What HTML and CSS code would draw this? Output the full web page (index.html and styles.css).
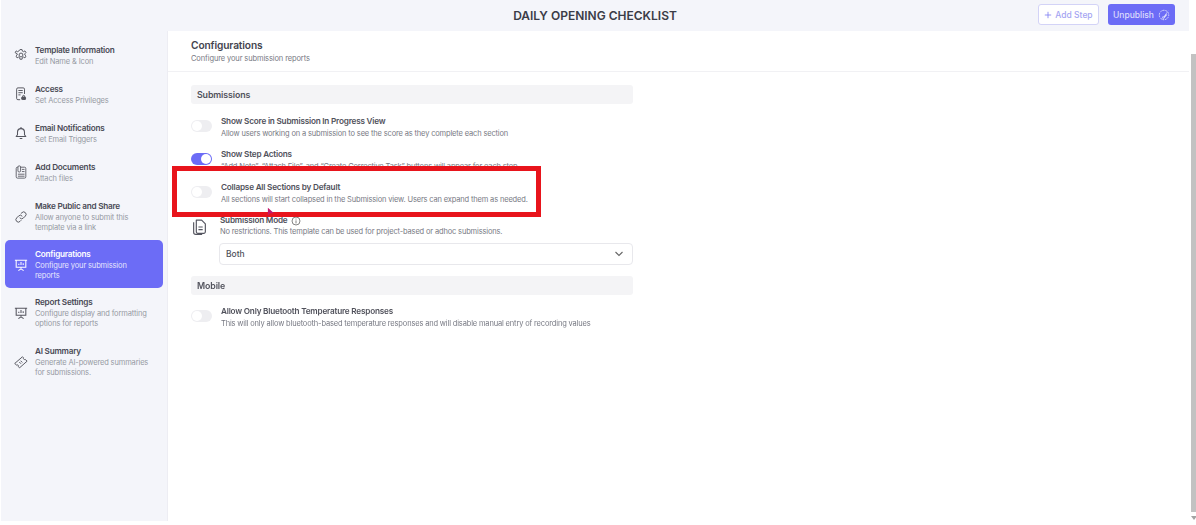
FILE: index.html
```html
<!DOCTYPE html>
<html lang="en">
<head>
<meta charset="utf-8">
<title>Daily Opening Checklist</title>
<link rel="stylesheet" href="styles.css">
</head>
<body>
<div class="app">
  <div class="window">
    <header class="topbar">
      <h1 class="page-title">DAILY OPENING CHECKLIST</h1>
      <div class="top-actions">
        <button class="btn btn-outline"><svg class="btn-icon" viewBox="0 0 10 10"><path d="M5 1v8M1 5h8" fill="none" stroke="currentColor" stroke-width="1"/></svg>Add Step</button>
        <button class="btn btn-solid">Unpublish<svg class="btn-icon-lg" viewBox="0 0 14 14"><path d="M7 1.500a5.500 5.500 0 1 0 0 11a5.500 5.500 0 0 0 0-11z" fill="none" stroke="currentColor" stroke-width="1.100" stroke-dasharray="2 1"/><path d="M4 12.500 12.500 1 9.500 6.500 11 6.500 5.500 13 7 8.500 5.500 8.500z" fill="currentColor"/></svg></button>
      </div>
    </header>
    <div class="body-row">
      <nav class="sidebar">
        <a class="nav-item">
          <svg class="nav-icon" viewBox="0 0 16 16"><g fill="none" stroke="currentColor" stroke-width="1.100"><circle cx="8" cy="8" r="2.200"/><path d="M6.800 1.800h2.400l.4 1.800 1.300.6 1.600-.9 1.200 2-1.300 1.300v1.400l1.300 1.300-1.200 2-1.600-.9-1.300.6-.4 1.800H6.800l-.4-1.800-1.300-.6-1.600.9-1.200-2 1.300-1.300V6.600L1.300 5.300l1.200-2 1.600.9 1.300-.6z" stroke-linejoin="round"/></g></svg>
          <span class="nav-text"><b>Template Information</b><small>Edit Name &amp; Icon</small></span>
        </a>
        <a class="nav-item">
          <svg class="nav-icon" viewBox="0 0 16 16"><g fill="none" stroke="currentColor" stroke-width="1.100"><path d="M7 14.500H4.500A1.500 1.500 0 0 1 3 13V2.500A1.500 1.500 0 0 1 4.500 1h6A1.500 1.500 0 0 1 12 2.500V8"/><path d="M5 4h5M5 6.500h5M5 9h2.500"/><circle cx="11" cy="10.800" r="1.200"/><rect x="8.800" y="11.500" width="4.400" height="2.800" rx=".6" fill="currentColor"/></g></svg>
          <span class="nav-text"><b>Access</b><small>Set Access Privileges</small></span>
        </a>
        <a class="nav-item">
          <svg class="nav-icon" viewBox="0 0 16 16"><g fill="none" stroke="currentColor" stroke-width="1.200"><path d="M2.500 12h11l-1.500-2V7a4 4 0 0 0-8 0v3z" stroke-linejoin="round"/><path d="M8 1v2M6.500 14.300h3"/></g></svg>
          <span class="nav-text"><b>Email Notifications</b><small>Set Email Triggers</small></span>
        </a>
        <a class="nav-item">
          <svg class="nav-icon" viewBox="0 0 16 16"><g fill="none" stroke="currentColor" stroke-width="1"><rect x="2.500" y="2.500" width="11" height="12.500" rx="1.500"/><path d="M9 5h3M9 7.500h3M4.500 10.500h7.500M4.500 12.800h7.500"/><rect x="4.500" y="1" width="3" height="7" rx="1.300" fill="#f4f5fa"/></g></svg>
          <span class="nav-text"><b>Add Documents</b><small>Attach files</small></span>
        </a>
        <a class="nav-item tall">
          <svg class="nav-icon" viewBox="0 0 16 16"><g fill="none" stroke="currentColor" stroke-width="1.100" stroke-linecap="round"><path d="M6.800 9.200a2.700 2.700 0 0 0 3.900 0l2.300-2.300a2.700 2.700 0 0 0-3.900-3.900l-1 1"/><path d="M9.200 6.800a2.700 2.700 0 0 0-3.900 0L3 9.100A2.700 2.700 0 0 0 6.900 13l1-1"/></g></svg>
          <span class="nav-text"><b>Make Public and Share</b><small>Allow anyone to submit this template via a link</small></span>
        </a>
        <a class="nav-item tall is-active">
          <svg class="nav-icon" viewBox="0 0 16 16"><g fill="none" stroke="currentColor" stroke-width="1.200"><path d="M1 2.500h14M2.500 2.500v8h11v-8M8 10.500v2M5 14.500l3-2 3 2"/><path d="M5.500 8V6.500M8 8V4.500M10.500 8V6"/></g></svg>
          <span class="nav-text"><b>Configurations</b><small>Configure your submission reports</small></span>
        </a>
        <a class="nav-item tall">
          <svg class="nav-icon" viewBox="0 0 16 16"><g fill="none" stroke="currentColor" stroke-width="1.200"><path d="M1 2.500h14M2.500 2.500v8h11v-8M8 10.500v2M5 14.500l3-2 3 2"/><path d="M5.500 8V6.500M8 8V4.500M10.500 8V6"/></g></svg>
          <span class="nav-text"><b>Report Settings</b><small>Configure display and formatting options for reports</small></span>
        </a>
        <a class="nav-item tall">
          <svg class="nav-icon" viewBox="0 0 16 16"><g fill="none" stroke="currentColor" stroke-width="1.100"><path d="M.8 9.700 9.700 2l1.200 1.300a1.300 1.300 0 0 0 1.800 1.700L15 7 6.300 14.700 5 13.300a1.300 1.300 0 0 0-1.900-1.700z" stroke-linejoin="round"/><path d="M7.500 6.500l2 2M6 8l2 2"/></g></svg>
          <span class="nav-text"><b>AI Summary</b><small>Generate AI-powered summaries for submissions.</small></span>
        </a>
      </nav>
      <main class="content">
        <div class="content-head">
          <h2>Configurations</h2>
          <p>Configure your submission reports</p>
        </div>
        <div class="sections">
          <div class="section-bar">Submissions</div>
          <div class="setting first">
            <span class="toggle"></span>
            <div class="setting-text"><h3>Show Score in Submission In Progress View</h3><p>Allow users working on a submission to see the score as they complete each section</p></div>
          </div>
          <div class="setting">
            <span class="toggle on"></span>
            <div class="setting-text"><h3>Show Step Actions</h3><p>“Add Note”, “Attach File”, and “Create Corrective Task” buttons will appear for each step.</p></div>
          </div>
          <div class="setting">
            <span class="toggle"></span>
            <div class="setting-text"><h3>Collapse All Sections by Default</h3><p>All sections will start collapsed in the Submission view. Users can expand them as needed.</p></div>
          </div>
          <div class="setting mode">
            <svg class="mode-icon" viewBox="0 0 16 16"><g fill="none" stroke="currentColor" stroke-width="1.100"><path d="M5 1.500h5l3.500 3.500v7.500a1.500 1.500 0 0 1-1.500 1.500H6.500A1.500 1.500 0 0 1 5 12.500z" stroke-linejoin="round"/><path d="M2.500 3.500v9.500a2 2 0 0 0 2 2h6M7 8h4M7 10.500h4"/></g></svg>
            <div class="setting-text grow">
              <h3>Submission Mode <svg class="info" viewBox="0 0 10 10"><circle cx="5" cy="5" r="4" fill="none" stroke="currentColor" stroke-width=".8"/><path d="M5 4.400v3M5 2.600v.9" stroke="currentColor" stroke-width=".8"/></svg></h3>
              <p>No restrictions. This template can be used for project-based or adhoc submissions.</p>
              <div class="select"><span>Both</span><svg class="chev" viewBox="0 0 10 6"><path d="M1.500 1 5 4.500 8.500 1" fill="none" stroke="currentColor" stroke-width="1.100"/></svg></div>
            </div>
          </div>
          <div class="section-bar mobile">Mobile</div>
          <div class="setting first">
            <span class="toggle"></span>
            <div class="setting-text"><h3>Allow Only Bluetooth Temperature Responses</h3><p>This will only allow bluetooth-based temperature responses and will disable manual entry of recording values</p></div>
          </div>
        </div>
      </main>
    </div>
  </div>
  <div class="scrollbar"><span class="thumb"></span><span class="arrow"></span></div>
</div>
<div class="callout"></div>
<svg class="cursor" viewBox="0 0 8 10"><path d="M1 0v9l2.500-2.500H8z" fill="#c2186b"/></svg>
</body>
</html>
```
FILE: styles.css
```css
* { box-sizing: border-box; }
html, body { margin: 0; height: 100%; }
body { background: #fff; font-family: Inter, "Liberation Sans", sans-serif; color: #3d3e48; overflow: hidden; position: relative; }
.app { display: flex; height: 525px; width: 1196px; filter: blur(.5px); }
.window { flex: 1; display: flex; flex-direction: column; min-width: 0; padding: 0 0 4px 1px; }
.topbar { height: 31px; background: #f4f5fa; display: flex; align-items: center; justify-content: center; position: relative; flex: none; }
.page-title { margin: 0; font-size: 12px; font-weight: 600; color: #3b3c47; }
.top-actions { position: absolute; right: 14px; top: 4px; display: flex; gap: 9px; }
.btn { height: 21px; border-radius: 3px; font: 500 8.500px Inter, sans-serif; display: flex; align-items: center; justify-content: center; padding: 0; }
.btn-outline { width: 61px; background: #fff; border: 1px solid #d3d3f7; color: #a5a5f2; gap: 3px; }
.btn-solid { width: 67px; background: #6c6cf6; border: 0; color: #dcdcfc; gap: 4px; }
.btn-icon { width: 8px; height: 8px; color: #7c7cf2; }
.btn-icon-lg { width: 12px; height: 12px; }
.body-row { flex: 1; display: flex; min-height: 0; }
.sidebar { width: 167px; flex: none; background: #f4f5fa; padding: 5px 4px 0 4px; display: flex; flex-direction: column; border-right: 1px solid #ededf3; }
.nav-item { display: flex; align-items: center; padding: 7.500px 0 8px 0; color: #4b4c56; border-radius: 5px; }
.nav-item.tall { padding-bottom: 6.500px; }
.nav-item.tall:nth-child(7) { padding-bottom: 7.500px; }
.nav-icon { width: 14px; height: 14px; margin: 0 7px 0 9px; flex: none; color: #55565f; }
.nav-text { display: flex; flex-direction: column; max-width: 116px; }
.nav-text b { font-size: 8.200px; line-height: 13px; letter-spacing: -.24px; font-weight: 600; color: #494a55; white-space: nowrap; }
.nav-text small { font-size: 7.500px; line-height: 10.500px; letter-spacing: -.14px; color: #969aa3; }
.nav-item.is-active { background: #6c6cf6; }
.is-active .nav-icon, .is-active b { color: #fff; }
.is-active small { color: #e6e6fd; }
.content { flex: 1; min-width: 0; background: #fff; }
.content-head { height: 41px; padding: 6px 0 0 23px; border-bottom: 1px solid #f1f1f4; }
.content-head h2 { margin: 0; font-size: 10.200px; line-height: 16px; letter-spacing: -.13px; font-weight: 600; color: #44454f; }
.content-head p { margin: 0; font-size: 7.500px; line-height: 12px; letter-spacing: -.12px; color: #777983; }
.sections { width: 465px; padding: 13px 0 0 23px; }
.section-bar { height: 19px; background: #f4f4f6; border-radius: 3px; padding-left: 6px; font-size: 8.800px; letter-spacing: -.1px; font-weight: 600; line-height: 19px; color: #50515b; }
.section-bar.mobile { margin-top: 11px; }
.setting { display: flex; gap: 9px; margin-top: 11px; height: 22px; }
.setting.first { margin-top: 12px; }
.section-bar.mobile + .setting { margin-top: 11px; }
.toggle { width: 21px; height: 12px; margin-top: 4px; border-radius: 6px; background: #eeeef1; position: relative; flex: none; }
.toggle::after { content: ""; position: absolute; left: 1px; top: 1px; width: 10px; height: 10px; border-radius: 50%; background: #fff; }
.toggle.on { background: #6c6cf6; }
.toggle.on::after { left: 10px; }
.setting-text h3 { margin: 0; font-size: 8.200px; line-height: 11px; letter-spacing: -.21px; font-weight: 600; color: #50515b; display: flex; align-items: center; gap: 3px; }
.setting-text p { margin: 1px 0 0; font-size: 7.500px; line-height: 11px; letter-spacing: -.16px; color: #777983; white-space: nowrap; }
.setting.mode { height: auto; gap: 12px; margin-top: 11px; }
.mode h3, .mode .setting-text p { margin-left: 1px; }
.mode .setting-text p { margin-top: 0; }
.mode-icon { width: 17px; height: 18px; margin-top: 3px; margin-right: -1px; color: #555660; flex: none; }
.grow { flex: 1; }
.info { width: 10px; height: 10px; color: #666; }
.select { margin-top: 6px; height: 22px; border: 1px solid #e8e8ec; border-radius: 4px; display: flex; align-items: center; justify-content: space-between; padding: 0 8px 0 6px; font-size: 8.500px; font-weight: 500; color: #50515b; }
.chev { width: 10px; height: 6px; color: #666; }
.scrollbar { width: 7px; flex: none; padding: 54px 0 0 2px; display: flex; flex-direction: column; align-items: center; }
.thumb { width: 5px; height: 458px; background: #c2c2c2; }
.arrow { margin-top: 4px; width: 0; height: 0; border-left: 3px solid transparent; border-right: 3px solid transparent; border-top: 4px solid #a3a3a3; }
.callout { position: absolute; left: 172px; top: 166px; width: 369px; height: 51px; border: 5px solid #e8141c; }
.cursor { position: absolute; left: 267px; top: 207px; width: 7px; height: 10px; }
```
